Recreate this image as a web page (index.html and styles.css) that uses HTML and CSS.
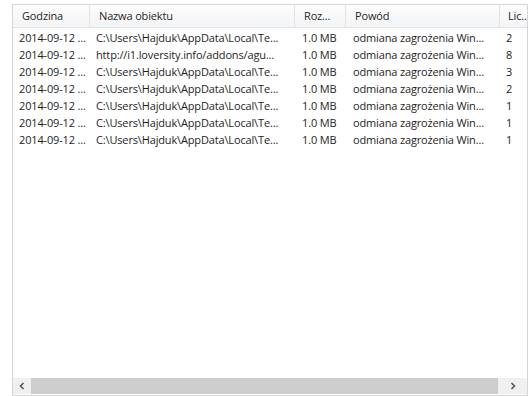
FILE: index.html
```html
<!DOCTYPE html>
<html>
<head>
  <title>Kwarantanna</title>
  <link rel="stylesheet" href="styles.css">
</head>
<body>
  <div class="list">
    <div class="header">
      <div class="col c1">Godzina</div>
      <div class="col c2">Nazwa obiektu</div>
      <div class="col c3">Roz...</div>
      <div class="col c4">Powód</div>
      <div class="col c5">Lic..</div>
    </div>
    <div class="rows">
      <div class="row">
        <div class="cell c1">2014-09-12 ...</div>
        <div class="cell c2">C:\Users\Hajduk\AppData\Local\Te...</div>
        <div class="cell c3">1.0 MB</div>
        <div class="cell c4">odmiana zagrożenia Win...</div>
        <div class="cell c5">2</div>
      </div>
      <div class="row">
        <div class="cell c1">2014-09-12 ...</div>
        <div class="cell c2">http://i1.loversity.info/addons/agu...</div>
        <div class="cell c3">1.0 MB</div>
        <div class="cell c4">odmiana zagrożenia Win...</div>
        <div class="cell c5">8</div>
      </div>
      <div class="row">
        <div class="cell c1">2014-09-12 ...</div>
        <div class="cell c2">C:\Users\Hajduk\AppData\Local\Te...</div>
        <div class="cell c3">1.0 MB</div>
        <div class="cell c4">odmiana zagrożenia Win...</div>
        <div class="cell c5">3</div>
      </div>
      <div class="row">
        <div class="cell c1">2014-09-12 ...</div>
        <div class="cell c2">C:\Users\Hajduk\AppData\Local\Te...</div>
        <div class="cell c3">1.0 MB</div>
        <div class="cell c4">odmiana zagrożenia Win...</div>
        <div class="cell c5">2</div>
      </div>
      <div class="row">
        <div class="cell c1">2014-09-12 ...</div>
        <div class="cell c2">C:\Users\Hajduk\AppData\Local\Te...</div>
        <div class="cell c3">1.0 MB</div>
        <div class="cell c4">odmiana zagrożenia Win...</div>
        <div class="cell c5">1</div>
      </div>
      <div class="row">
        <div class="cell c1">2014-09-12 ...</div>
        <div class="cell c2">C:\Users\Hajduk\AppData\Local\Te...</div>
        <div class="cell c3">1.0 MB</div>
        <div class="cell c4">odmiana zagrożenia Win...</div>
        <div class="cell c5">1</div>
      </div>
      <div class="row">
        <div class="cell c1">2014-09-12 ...</div>
        <div class="cell c2">C:\Users\Hajduk\AppData\Local\Te...</div>
        <div class="cell c3">1.0 MB</div>
        <div class="cell c4">odmiana zagrożenia Win...</div>
        <div class="cell c5">1</div>
      </div>
    </div>
    <div class="hscroll">
      <div class="arrow left">
        <svg width="8" height="8" viewBox="0 0 8 8"><path d="M5.5 1 L2.5 4 L5.5 7" fill="none" stroke="#555" stroke-width="1.6"/></svg>
      </div>
      <div class="thumb"></div>
      <div class="arrow right">
        <svg width="8" height="8" viewBox="0 0 8 8"><path d="M2.5 1 L5.5 4 L2.5 7" fill="none" stroke="#555" stroke-width="1.6"/></svg>
      </div>
    </div>
  </div>
</body>
</html>
```

FILE: styles.css
```css
body {
  margin: 0;
  padding: 4px 2px 0 12px;
  background: #fff;
  font-family: "Open Sans", "Noto Sans", sans-serif;
  font-size: 11px;
  letter-spacing: -0.15px;
  color: #1e1e1e;
}
.list {
  width: 514px;
  height: 390px;
  border: 1px solid #d5d5d5;
  display: flex;
  flex-direction: column;
}
.header {
  display: flex;
  height: 22px;
  background: linear-gradient(#fdfdfd, #f3f4f6);
  border-bottom: 1px solid #e3e3e3;
}
.col {
  line-height: 22px;
  padding-left: 9px;
  border-left: 1px solid #e3e3e3;
  white-space: nowrap;
  box-sizing: border-box;
  flex-shrink: 0;
}
.col.c1 {
  border-left: none;
  padding-left: 9px;
}
.col.c5 {
  padding-left: 8px;
}
.c1 { width: 76px; }
.c2 { width: 205px; }
.c3 { width: 51px; }
.c4 { width: 154px; }
.c5 { width: 28px; }
.rows {
  flex: 1;
  padding-top: 1px;
}
.row {
  display: flex;
  height: 17px;
}
.cell {
  line-height: 17px;
  padding-left: 7px;
  white-space: nowrap;
  box-sizing: border-box;
  flex-shrink: 0;
}
.cell.c1 { padding-left: 6px; }
.cell.c3, .cell.c4 { padding-left: 8px; }
.hscroll {
  display: flex;
  height: 16px;
  margin-bottom: 1px;
}
.arrow {
  display: flex;
  align-items: center;
  justify-content: center;
  background: #f0f0f0;
}
.arrow.left { width: 18px; }
.arrow.right { width: 29px; }
.thumb {
  flex: 1;
  background: #cdcdcd;
}
```
